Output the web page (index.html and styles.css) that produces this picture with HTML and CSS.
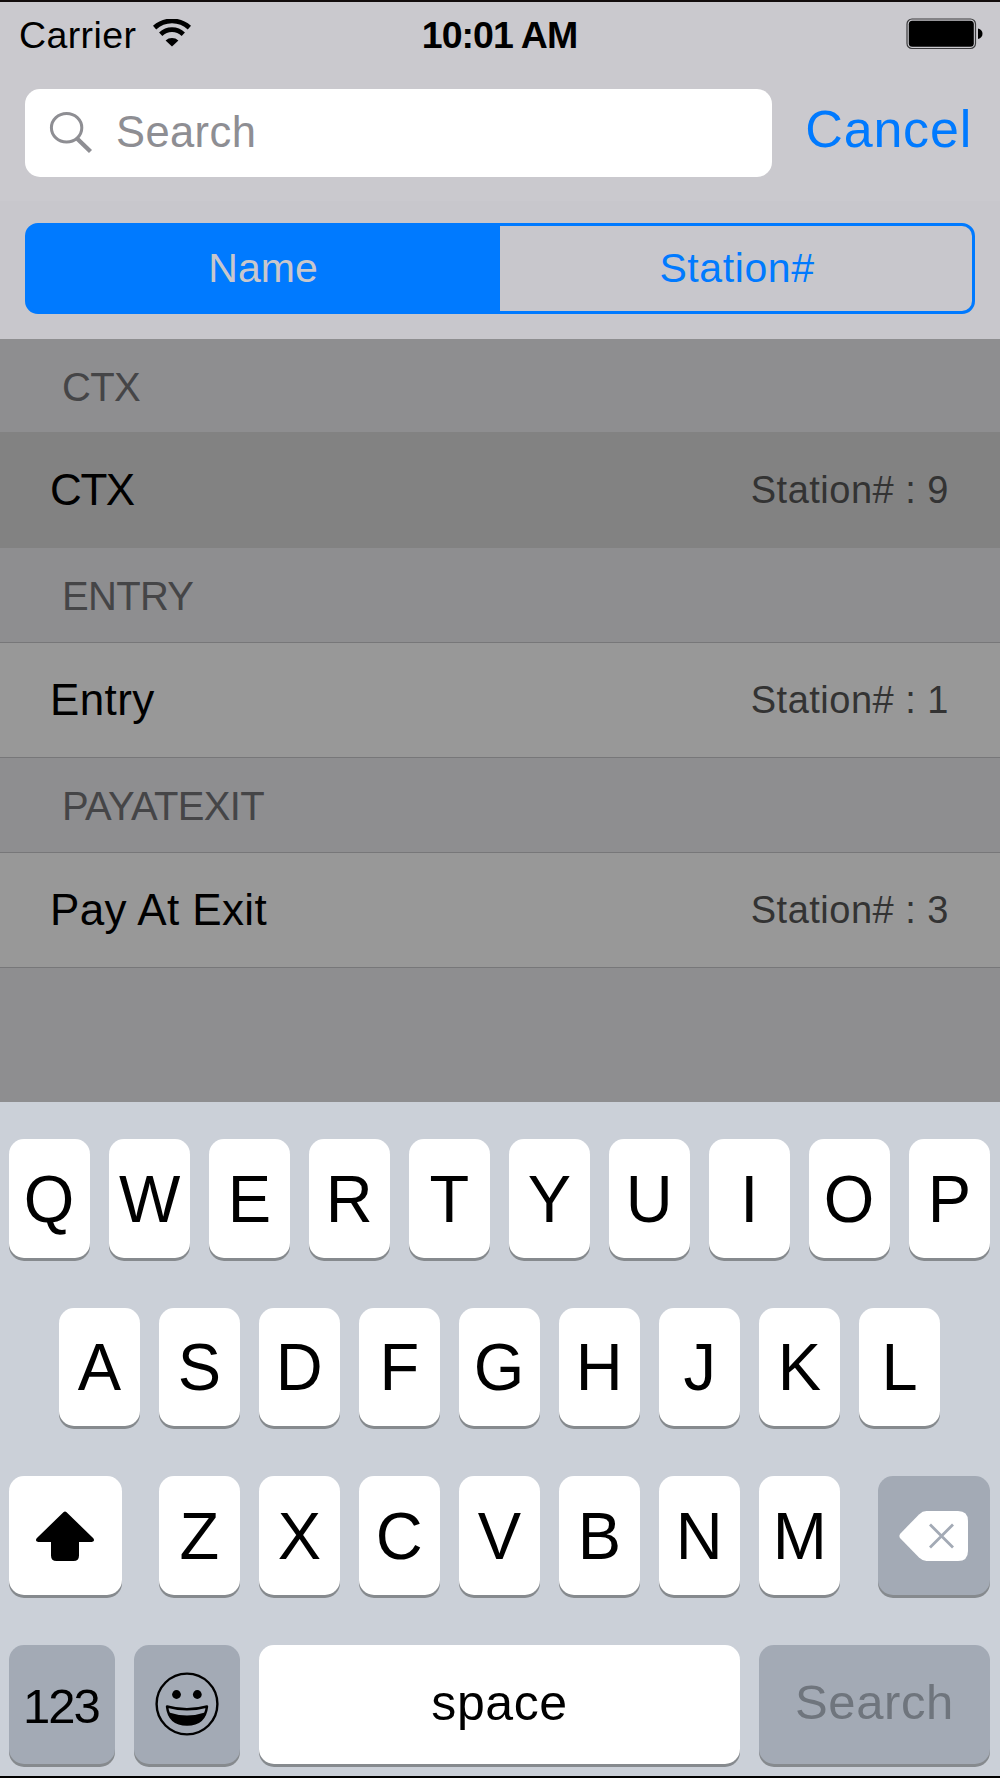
FILE: index.html
```html
<!DOCTYPE html>
<html lang="en">
<head>
<meta charset="UTF-8" />
<meta name="viewport" content="width=device-width, initial-scale=1" />
<title>Stations</title>
<link rel="stylesheet" href="styles.css">
</head>
<body>

<div class="phone">
  <header class="top">
    <div class="status-bar">
      <div class="carrier">
        <span>Carrier</span>
        <svg class="wifi" width="38" height="28" viewBox="0 0 38 28">
          <path d="M1.600 8.600a26 26 0 0 1 34.800 0" fill="none" stroke="#000" stroke-width="4.800" />
          <path d="M7.700 15.200a16.500 16.500 0 0 1 22.600 0" fill="none" stroke="#000" stroke-width="4.800" />
          <path d="M12.600 21.400a9.500 9.500 0 0 1 12.800 0L19 27.600z" fill="#000" />
        </svg>
      </div>
      <span class="clock">10:01 AM</span>
      <svg class="battery" width="78" height="32" viewBox="0 0 78 32">
        <rect x="1" y="1" width="68.5" height="29.5" rx="5" fill="none" stroke="#3c3c3e" stroke-width="1.2" />
        <rect x="2.8" y="2.8" width="65" height="26" rx="3.5" fill="#000" />
        <path d="M72 10.5c6 1.5 6 9 0 10.5z" fill="#000" />
      </svg>
    </div>

    <div class="search-row">
      <div class="search-field">
        <svg width="44" height="42" viewBox="0 0 44 42" fill="none" stroke="#8e8e93">
          <ellipse cx="17.6" cy="15.8" rx="15.2" ry="14.3" stroke-width="3" />
          <path d="M28 26.500L41.500 39.500" stroke-width="4.400" />
        </svg>
        <span>Search</span>
      </div>
      <span class="cancel">Cancel</span>
    </div>
  </header>

  <div class="scope-bar">
    <div class="segmented">
      <div class="segment active">Name</div>
      <div class="segment">Station#</div>
    </div>
  </div>

  <main class="list">
    <h2 class="section first">CTX</h2>
    <div class="item selected"><span>CTX</span><span class="detail">Station# : 9</span></div>
    <h2 class="section">ENTRY</h2>
    <div class="item"><span>Entry</span><span class="detail">Station# : 1</span></div>
    <h2 class="section">PAYATEXIT</h2>
    <div class="item"><span>Pay At Exit</span><span class="detail">Station# : 3</span></div>
  </main>

  <div class="keyboard">
    <div class="keys">
      <div class="key"><b>Q</b></div>
      <div class="key"><b>W</b></div>
      <div class="key"><b>E</b></div>
      <div class="key"><b>R</b></div>
      <div class="key"><b>T</b></div>
      <div class="key"><b>Y</b></div>
      <div class="key"><b>U</b></div>
      <div class="key"><b>I</b></div>
      <div class="key"><b>O</b></div>
      <div class="key"><b>P</b></div>
    </div>
    <div class="keys">
      <div class="key"><b>A</b></div>
      <div class="key"><b>S</b></div>
      <div class="key"><b>D</b></div>
      <div class="key"><b>F</b></div>
      <div class="key"><b>G</b></div>
      <div class="key"><b>H</b></div>
      <div class="key"><b>J</b></div>
      <div class="key"><b>K</b></div>
      <div class="key"><b>L</b></div>
    </div>
    <div class="keys">
      <div class="key shift">
        <svg width="60" height="52" viewBox="0 0 60 52">
          <path d="M28.4 2.2q1.6-1.5 3.2 0L58.3 28.3q2 3.2-1.4 3.7H44v13.500q0 5.500-5.500 5.500h-17q-5.500 0-5.500-5.500V32H3.100q-3.400-.5-1.400-3.700z" fill="#000" />
        </svg>
      </div>
      <div class="key"><b>Z</b></div>
      <div class="key"><b>X</b></div>
      <div class="key"><b>C</b></div>
      <div class="key"><b>V</b></div>
      <div class="key"><b>B</b></div>
      <div class="key"><b>N</b></div>
      <div class="key"><b>M</b></div>
      <div class="key dark delete">
        <svg width="70" height="52" viewBox="0 0 70 52">
          <path d="M27.500 1H59q10 0 10 10v30q0 10-10 10H27.500q-4 0-7.500-3.400L1.700 28.800q-2.700-2.800 0-5.600L20 4.400Q23.500 1 27.500 1z" fill="#fff" />
          <path d="M31 14.500L54 37.500M54 14.500L31 37.500" stroke="#a3aab5" stroke-width="2.800" />
        </svg>
      </div>
    </div>
    <div class="keys">
      <div class="key dark numbers">123</div>
      <div class="key dark emoji">
        <svg width="64" height="64" viewBox="0 0 64 64">
          <circle cx="32" cy="32" r="30.400" fill="none" stroke="#000" stroke-width="2.400" />
          <circle cx="21.500" cy="22.500" r="4.400" fill="#000" />
          <circle cx="42.300" cy="22.500" r="4.400" fill="#000" />
          <path d="M12 34.500q20 5.600 40 0C50.500 47 43 52.500 32 52.500S13.500 47 12 34.500z" fill="none" stroke="#000" stroke-width="2.400" stroke-linejoin="round" />
          <path d="M14 40.500q18 6 36 0C46.500 49 40 52.500 32 52.500S17.500 49 14 40.500z" fill="#000" />
        </svg>
      </div>
      <div class="key space">space</div>
      <div class="key dark search-key">Search</div>
    </div>
  </div>
</div>

</body>
</html>
```
FILE: styles.css
```css
:root {
  --blue: #007aff;
  --bar: #cac9ce;
  --scope: #c8c7cc;
  --line: #777779;
  --key-dark: #a3aab5;
}
* {
  box-sizing: border-box;
}
body {
  margin: 0;
  font-family: "Liberation Sans", Arial, sans-serif;
  color: #000;
}
.phone {
  width: 1000px;
  height: 1778px;
  display: flex;
  flex-direction: column;
  border-top: 2px solid #120c0c;
  border-bottom: 2px solid #000;
  overflow: hidden;
  white-space: nowrap;
}
svg {
  display: block;
  flex: none;
}

/* status bar and search */
.top {
  height: 199px;
  background: var(--bar);
}
.status-bar {
  height: 65px;
  display: grid;
  grid-template-columns: 1fr auto 1fr;
  align-items: center;
  padding: 1px 16px 0 19px;
  font-size: 37.5px;
}
.carrier {
  display: flex;
  align-items: center;
  gap: 17px;
  letter-spacing: 0.4px;
}
.wifi {
  margin-bottom: 5px;
}
.clock {
  margin-right: 4px;
  font-weight: 700;
  letter-spacing: -1px;
}
.battery {
  justify-self: end;
  margin-bottom: 3px;
}
.search-row {
  display: flex;
  align-items: center;
  padding: 22px 28px 0 25px;
}
.search-field {
  width: 747px;
  height: 88px;
  display: flex;
  align-items: center;
  gap: 23px;
  padding: 1px 24px 2px;
  border-radius: 15px;
  background: #fff;
  color: #8e8e93;
  font-size: 43.5px;
  letter-spacing: 0.4px;
}
.cancel {
  margin: 0 0 9px auto;
  color: var(--blue);
  font-size: 52px;
  letter-spacing: 0.8px;
}
.scope-bar {
  height: 138px;
  padding: 22px 25px 0;
  background: var(--scope);
}
.segmented {
  height: 91px;
  display: flex;
  border: 3px solid var(--blue);
  border-radius: 13px;
  background: linear-gradient(90deg, var(--blue) 50%, transparent 50%);
  overflow: hidden;
}
.segment {
  flex: 1;
  display: flex;
  align-items: center;
  justify-content: center;
  color: var(--blue);
  font-size: 41px;
  letter-spacing: 0.6px;
}
.segment.active {
  padding-right: 4px;
  color: var(--scope);
  letter-spacing: 0;
}

/* dimmed results */
.list {
  height: 763px;
  background: #8e8e90;
}
.section {
  height: 95px;
  display: flex;
  align-items: center;
  margin: 0;
  padding: 3px 0 0 62px;
  border-bottom: 1px solid var(--line);
  color: #454547;
  font-size: 40px;
  font-weight: 400;
  letter-spacing: -0.7px;
}
.section.first {
  height: 93px;
  border-bottom: none;
}
.item {
  height: 115px;
  display: flex;
  align-items: center;
  justify-content: space-between;
  padding: 0 51px 0 50px;
  border-bottom: 1px solid var(--line);
  background: #989898;
  font-size: 44px;
  letter-spacing: 0.4px;
}
.item.selected {
  height: 116px;
  border-bottom: none;
  background: #828282;
  letter-spacing: -1.4px;
}
.detail {
  color: #333;
  font-size: 38px;
  letter-spacing: 0.5px;
}

/* keyboard */
.keyboard {
  flex: 1;
  display: flex;
  flex-direction: column;
  gap: 50px;
  padding: 37px 10px 0 9px;
  background: #cbd0d8;
}
.keys {
  display: flex;
  justify-content: center;
  gap: 19px;
}
.key {
  width: 81px;
  height: 118.67px;
  display: flex;
  align-items: center;
  justify-content: center;
  border-radius: 15px;
  background: #fff;
  box-shadow: 0 3px 0 #868a8e;
}
.key b {
  font-size: 67px;
  font-weight: 400;
  line-height: 1;
  transform: scaleX(0.97);
}
.key.dark {
  background: var(--key-dark);
}
.key.shift {
  width: 112.5px;
  margin-right: 18.5px;
}
.key.delete {
  width: 112.5px;
  margin-left: 18.5px;
}
.key.numbers {
  width: 106px;
  padding: 4px 2px 0 0;
  font-size: 49px;
  letter-spacing: -2px;
}
.key.emoji {
  width: 106px;
}
.key.space {
  width: 481px;
  padding-bottom: 3px;
  font-size: 50px;
  letter-spacing: 0.6px;
}
.key.search-key {
  width: 231px;
  padding-bottom: 4px;
  color: #6f757d;
  font-size: 49px;
  letter-spacing: 0.6px;
}
```
